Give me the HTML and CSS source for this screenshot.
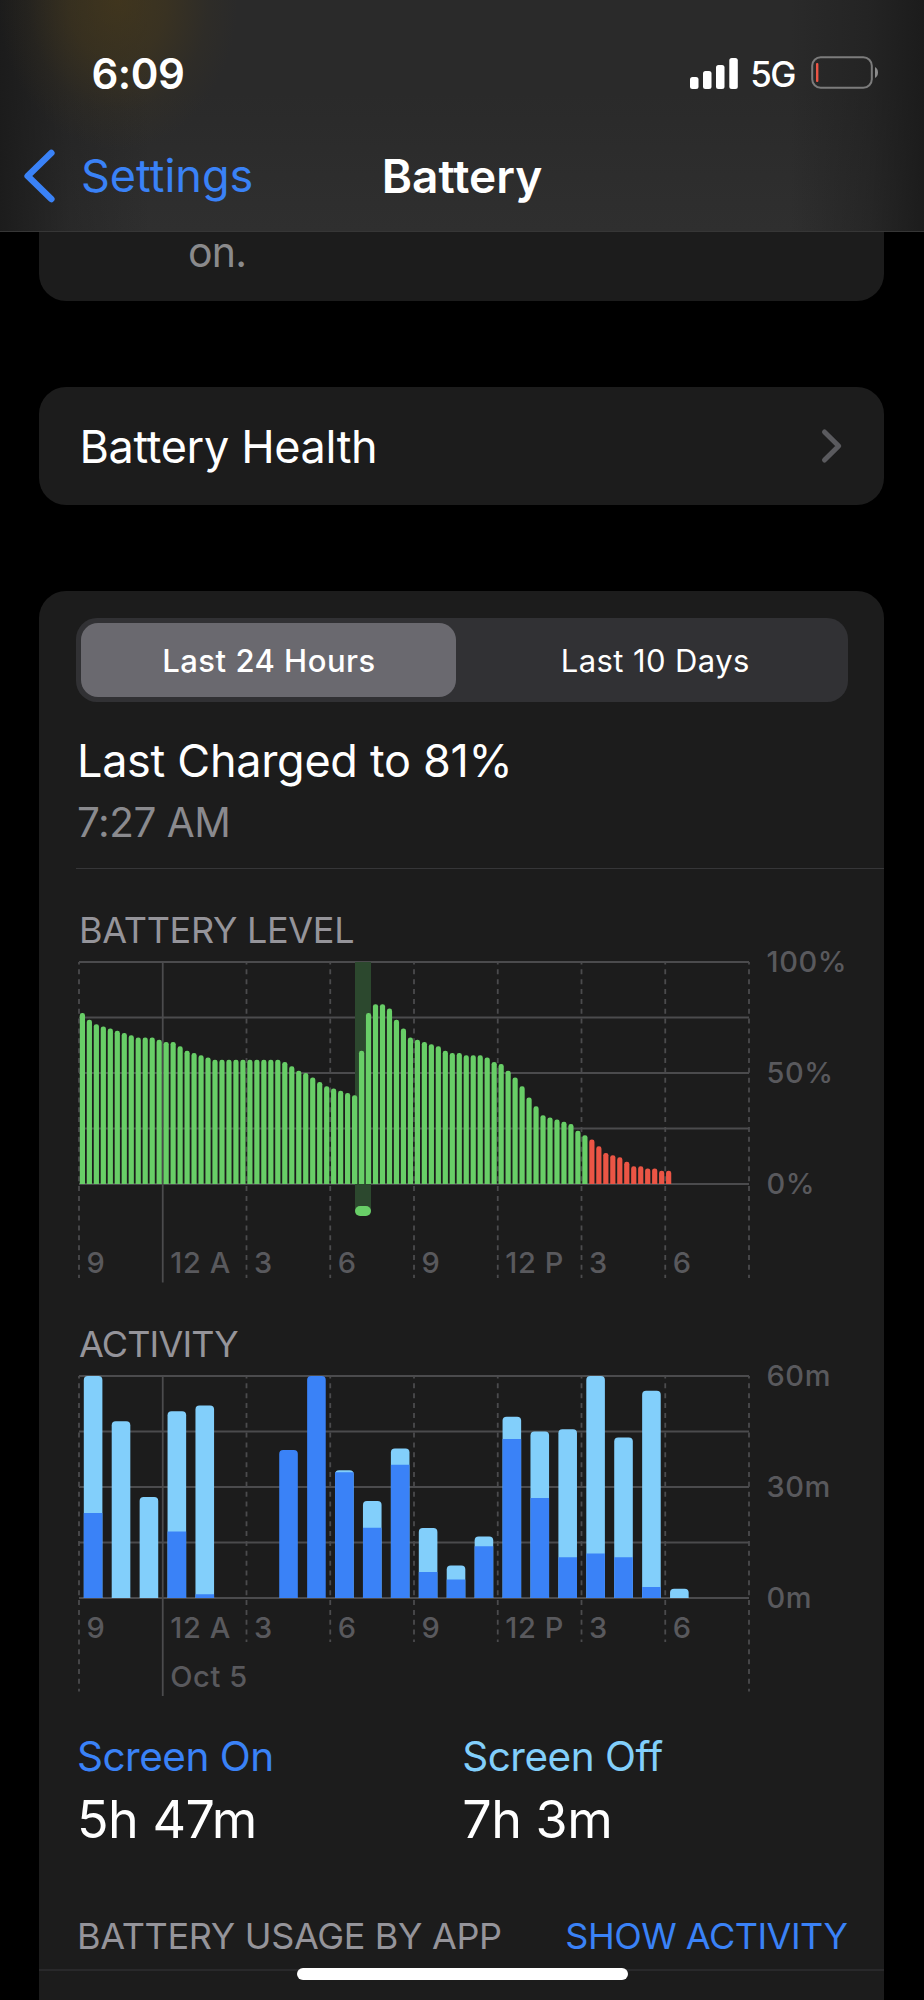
FILE: index.html
```html
<!DOCTYPE html>
<html lang="en">
<head>
    <meta charset="UTF-8">
    <meta name="viewport" content="width=device-width, initial-scale=1.0">
    <title>Battery</title>
    <link rel="stylesheet" href="styles.css">
</head>
<body>

    <header class="header">
        <div class="status-bar">
            <span class="time">6:09</span>
            <div class="status-icons">
                <svg class="signal" width="48" height="31" viewBox="0 0 48 31">
                    <rect x="0" y="19" width="8.5" height="12" rx="2.5"/>
                    <rect x="13" y="13" width="8.5" height="18" rx="2.5"/>
                    <rect x="26" y="7" width="8.5" height="24" rx="2.5"/>
                    <rect x="39.3" y="0" width="8.5" height="31" rx="2.5"/>
                </svg>
                <span class="network">5G</span>
                <svg class="battery-icon" width="68" height="34" viewBox="0 0 68 34">
                    <rect x="1.2" y="1.2" width="59.6" height="30.6" rx="8.5" fill="none" stroke="#7c7c7c" stroke-width="2"/>
                    <rect x="5" y="7" width="2.4" height="19" rx="1" fill="#eb5545"/>
                    <path d="M64 11 C68 13 68 20 64 22 Z" fill="#8c8c8c"/>
                </svg>
            </div>
        </div>
        <nav class="nav-bar">
            <a href="#" class="back">
                <svg width="34" height="56" viewBox="0 0 34 56">
                    <path d="M29.3 5 L5.7 28 L29.3 51" fill="none" stroke="#3a82f7" stroke-width="6.6" stroke-linecap="round" stroke-linejoin="round"/>
                </svg>
                <span>Settings</span>
            </a>
            <h1>Battery</h1>
        </nav>
    </header>

    <main class="content">
        <section class="card card-top">
            <p>on.</p>
        </section>

        <section class="card card-link">
            <span>Battery Health</span>
            <svg width="24" height="36" viewBox="0 0 24 36">
                <path d="M4.5 4 L18.7 18 L4.5 32" fill="none" stroke="#5a5a5e" stroke-width="5" stroke-linecap="round" stroke-linejoin="round"/>
            </svg>
        </section>

        <section class="card card-usage">
            <div class="segmented">
                <button class="segment active">Last 24 Hours</button>
                <button class="segment">Last 10 Days</button>
            </div>

            <div class="last-charge">
                <h2>Last Charged to 81%</h2>
                <p>7:27 AM</p>
            </div>

            <h3 class="chart-title">BATTERY LEVEL</h3>
            <svg class="chart" id="levelChart" width="790" height="348"></svg>

            <h3 class="chart-title activity-title">ACTIVITY</h3>
            <svg class="chart" id="activityChart" width="790" height="348"></svg>

            <div class="totals">
                <div class="total screen-on">
                    <h4>Screen On</h4>
                    <p>5h 47m</p>
                </div>
                <div class="total screen-off">
                    <h4>Screen Off</h4>
                    <p>7h 3m</p>
                </div>
            </div>

            <div class="usage-header">
                <span class="usage-label">BATTERY USAGE BY APP</span>
                <a href="#" class="show-activity">SHOW ACTIVITY</a>
            </div>
        </section>
    </main>

    <div class="home-indicator"></div>

    <script>
        // Battery percentage, one value every 15 minutes
        const levels = [
            77, 74, 72, 71, 70, 69, 68, 67, 66, 66, 66, 65,
            64, 64, 62, 60, 59, 58, 57, 56, 56, 56, 56, 56,
            56, 56, 56, 56, 56, 55, 53, 51, 50, 48, 46, 44,
            43, 42, 41, 40, 60, 77, 81, 81, 79, 74, 70, 66,
            65, 64, 63, 62, 60, 59, 59, 58, 58, 58, 57, 55,
            54, 51, 48, 44, 39, 35, 31, 30, 29, 28, 27, 24,
            22, 20, 17, 14, 13, 12, 10, 8, 8, 7, 7, 6, 6
        ];

        // Minutes per hour: [screen on, total]
        const activity = [
            [23, 60], [0, 47.8], [0, 27.3], [18, 50.5], [1, 52], [0, 0], [0, 0], [40, 40],
            [60, 60], [34, 34.5], [19, 26.2], [36, 40.4], [7, 18.9], [5, 8.8], [14, 16.6], [43, 49],
            [27, 45], [11, 45.6], [12, 60], [11, 43.4], [3, 56], [0, 2.5]
        ];

        const hours = ['9', '12 A', '3', '6', '9', '12 P', '3', '6'];
        const left = 3;
        const top0 = 10;
        const width = 670;
        const height = 222;
        const bottom = top0 + height;

        function add(svg, tag, attrs, text) {
            const el = document.createElementNS('http://www.w3.org/2000/svg', tag);
            for (const key in attrs) {
                el.setAttribute(key, attrs[key]);
            }
            if (text) el.textContent = text;
            svg.appendChild(el);
        }

        // Bar with only the top corners rounded
        function bar(svg, x, y, w, h, r, cls) {
            r = Math.min(r, h);
            const d = `M${x} ${y + h} V${y + r} Q${x} ${y} ${x + r} ${y} H${x + w - r} Q${x + w} ${y} ${x + w} ${y + r} V${y + h} Z`;
            add(svg, 'path', { d: d, class: cls });
        }

        function drawGrid(svg, hourBottom, edgeBottom, labelY, yLabels) {
            for (let i = 0; i < 5; i++) {
                const y = top0 + i * height / 4;
                add(svg, 'line', { x1: left, x2: left + width, y1: y, y2: y, class: 'grid-line' });
            }
            for (let i = 0; i < 9; i++) {
                const x = left + i * width / 8;
                const midnight = i === 1;
                const end = midnight ? edgeBottom + 4.5 : (i === 0 || i === 8 ? edgeBottom : hourBottom);
                add(svg, 'line', { x1: x, x2: x, y1: top0, y2: end, class: midnight ? 'grid-line' : 'grid-line dashed' });
                if (hours[i]) add(svg, 'text', { x: x + 7.5, y: labelY, class: 'axis-label' }, hours[i]);
            }
            yLabels.forEach((label, i) => {
                add(svg, 'text', { x: left + width + 17.5, y: top0 + i * height / 2 + 9.7, class: 'axis-label' }, label);
            });
        }

        const levelChart = document.getElementById('levelChart');
        drawGrid(levelChart, 326, 326, 321, ['100%', '50%', '0%']);
        add(levelChart, 'rect', { x: 279, y: top0, width: 16, height: 249, class: 'charging' });
        levels.forEach((level, i) => {
            const h = level * height / 100;
            bar(levelChart, left + 0.8 + i * width / 96, bottom - h, 5.2, h, 2.4, i < 73 ? 'level' : 'level-low');
        });
        add(levelChart, 'rect', { x: 279, y: 254, width: 16, height: 10, rx: 5, class: 'level' });

        const activityChart = document.getElementById('activityChart');
        drawGrid(activityChart, 276, 325.5, 271.5, ['60m', '30m', '0m']);
        add(activityChart, 'text', { x: left + width / 8 + 7.5, y: 321, class: 'axis-label' }, 'Oct 5');
        activity.forEach(([on, total], i) => {
            const x = left + 4.8 + i * width / 24;
            const onHeight = on * height / 60;
            const totalHeight = total * height / 60;
            if (total > on) bar(activityChart, x, bottom - totalHeight, 18.6, totalHeight, 4, 'off');
            if (on) bar(activityChart, x, bottom - onHeight, 18.6, onHeight, total > on ? 0 : 4, 'on');
        });
    </script>
</body>
</html>
```

FILE: styles.css
```css
* {
    box-sizing: border-box;
    margin: 0;
    padding: 0;
}

body {
    font-family: Inter, "Liberation Sans", sans-serif;
    background: #000;
    color: #fff;
    width: 924px;
    height: 2000px;
    overflow: hidden;
    position: relative;
}

a {
    color: #3a82f7;
    text-decoration: none;
}

/* Header */
.header {
    height: 232px;
    border-bottom: 1px solid #363636;
    background:
        radial-gradient(ellipse 120px 150px at 118px 0, rgba(76, 60, 24, 0.65), rgba(76, 60, 24, 0.45) 40%, rgba(76, 60, 24, 0.12) 75%, rgba(76, 60, 24, 0)),
        linear-gradient(to right, rgba(26, 26, 26, 0.9), rgba(26, 26, 26, 0.3) 70px, rgba(26, 26, 26, 0) 150px, rgba(26, 26, 26, 0) 790px, rgba(26, 26, 26, 0.4) 870px, rgba(26, 26, 26, 0.9)),
        linear-gradient(#2a2a2a, #2a2a2a 40%, #2f2f2f);
}

.status-bar {
    display: flex;
    justify-content: space-between;
    align-items: center;
    height: 120px;
    padding: 26px 45.5px 0 91.5px;
}

.time {
    font-size: 42px;
    font-weight: 600;
    letter-spacing: -0.5px;
}

.status-icons {
    display: flex;
    align-items: center;
}

.signal {
    fill: #fff;
}

.network {
    font-size: 35px;
    font-weight: 500;
    letter-spacing: -1.5px;
    margin: 2px 15.5px 0 12.5px;
}

.nav-bar {
    display: grid;
    grid-template-columns: 1fr auto 1fr;
    align-items: center;
    height: 111px;
}

.back {
    display: flex;
    align-items: center;
    gap: 25px;
    padding-left: 22px;
    font-size: 45px;
}

.nav-bar h1 {
    font-size: 46px;
    font-weight: 600;
}

/* Cards */
.content {
    display: flex;
    flex-direction: column;
    gap: 86px;
    padding: 0 40px 0 39px;
}

.card {
    background: #1c1c1c;
    border-radius: 27px;
}

.card-top {
    height: 69px;
    padding-left: 149px;
    border-radius: 0 0 27px 27px;
    color: #8a8a8c;
    font-size: 41px;
    line-height: 40px;
    letter-spacing: -0.8px;
}

.card-link {
    display: flex;
    justify-content: space-between;
    align-items: center;
    height: 118px;
    padding: 0 40px 0 40.5px;
    font-size: 45px;
    letter-spacing: -0.35px;
}

.card-usage {
    height: 1440px;
    padding: 27px 36.5px 0 37px;
}

.segmented {
    display: grid;
    grid-template-columns: 375px 1fr;
    column-gap: 12px;
    height: 84px;
    padding: 5px;
    border-radius: 21px;
    background: #313134;
}

.segment {
    border: none;
    border-radius: 17px;
    background: none;
    color: #fff;
    font-family: inherit;
    font-size: 31px;
    letter-spacing: 0.4px;
}

.segment.active {
    background: #6a696f;
    padding-left: 1px;
    font-weight: 500;
    letter-spacing: 0.5px;
}

.last-charge {
    height: 167px;
    margin-right: -36.5px;
    padding: 31.5px 0 0 1px;
    border-bottom: 1px solid #363638;
}

.last-charge h2 {
    font-size: 45px;
    font-weight: 400;
    line-height: 54px;
    letter-spacing: -0.3px;
}

.last-charge p {
    margin-top: 11px;
    color: #8a8a8e;
    font-size: 40.5px;
    line-height: 48px;
    letter-spacing: -0.5px;
}

/* Charts */
.chart-title {
    margin-top: 39px;
    padding-left: 3px;
    color: #95949a;
    font-size: 36px;
    font-weight: 400;
    line-height: 44px;
    letter-spacing: -0.3px;
}

.activity-title {
    margin-top: 22px;
    letter-spacing: -0.85px;
}

.chart {
    display: block;
    overflow: visible;
}

.grid-line {
    stroke: #4b4b4d;
    stroke-width: 1.8;
}

.dashed {
    stroke-dasharray: 5 4.85;
    stroke-dashoffset: 2.5;
}

.axis-label {
    fill: #59595d;
    font-size: 29px;
    font-weight: 500;
    letter-spacing: 0.6px;
}

.charging {
    fill: #2c482e;
}

.level {
    fill: #68ce67;
}

.level-low {
    fill: #eb5545;
}

.on {
    fill: #3a82f7;
}

.off {
    fill: #82cffb;
}

/* Totals */
.totals {
    display: grid;
    grid-template-columns: 1fr 1fr;
    margin-top: 18px;
    padding-left: 1px;
}

.total h4 {
    font-size: 40.5px;
    font-weight: 400;
    line-height: 50px;
    letter-spacing: -0.5px;
}

.total p {
    margin-top: 6px;
    font-size: 52px;
    line-height: 64px;
    letter-spacing: -0.5px;
}

.screen-on h4 {
    color: #3a82f7;
}

.screen-off h4 {
    color: #82cffb;
}

.usage-header {
    display: flex;
    justify-content: space-between;
    margin: 62px -36.5px 0 -37px;
    padding: 0 36.5px 11px 38px;
    border-bottom: 2px solid #29292b;
    font-size: 36px;
    line-height: 44px;
    letter-spacing: -0.5px;
}

.usage-label {
    color: #95949a;
    letter-spacing: -0.33px;
}

.home-indicator {
    position: absolute;
    left: 297px;
    top: 1968px;
    width: 331px;
    height: 12px;
    border-radius: 6px;
    background: #fff;
}
```
